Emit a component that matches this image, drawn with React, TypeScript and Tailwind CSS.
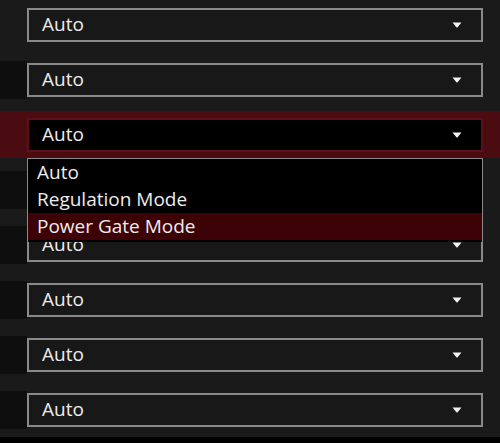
import React from 'react';

const rows = ['Auto', 'Auto', 'Auto', 'Auto', 'Auto', 'Auto', 'Auto', 'Auto'];
const options = ['Auto', 'Regulation Mode', 'Power Gate Mode'];

const Arrow: React.FC = () => (
  <svg width="10" height="6" viewBox="0 0 10 6" className="shrink-0">
    <path d="M0.5 0.5 H9.5 L5.6 5.3 Q5 5.9 4.4 5.3 Z" fill="#f2f2f2" />
  </svg>
);

const App: React.FC = () => {
  const openIndex = 2;
  const selected = 2;

  return (
    <div
      className="w-[500px] h-[443px] bg-[#1a1a1a] overflow-hidden flex flex-col"
      style={{ fontFamily: '"Open Sans", "Noto Sans", sans-serif' }}
    >
      <div className="flex-1 flex flex-col gap-[8px] pt-[1px]">
        {rows.map((value, i) => {
          const active = i === openIndex;
          return (
            <div
              key={i}
              className={`relative h-[47px] shrink-0 flex items-center ${active ? 'bg-[#4a0b11]' : ''}`}
            >
              <div
                className={`w-[27px] h-[38px] ${i === 0 || active ? '' : 'bg-[#0e0e0e]'}`}
              />
              <div
                className={`relative w-[456px] h-[34px] border-2 flex items-center justify-between pl-[13px] pr-[19px] ${
                  active ? 'bg-black border-[#5e0f17]' : 'bg-[#181818] border-[#8a8a8a]'
                }`}
              >
                <span className="text-[19px] leading-none text-[#ececec]">{value}</span>
                <Arrow />
                {active && (
                  <div className="absolute z-10 left-[-2px] top-[38px] w-[456px] bg-black border border-b-0 border-[#8a8a8a] pb-[2px]">
                    {options.map((opt, j) => (
                      <div
                        key={opt}
                        className={`h-[27px] flex items-center pl-[9px] text-[19px] leading-none text-[#ececec] ${
                          j === selected ? 'bg-[#3c0206]' : ''
                        }`}
                      >
                        {opt}
                      </div>
                    ))}
                  </div>
                )}
              </div>
            </div>
          );
        })}
      </div>
      <div className="h-[6px] bg-black shrink-0" />
    </div>
  );
};

export default App;
